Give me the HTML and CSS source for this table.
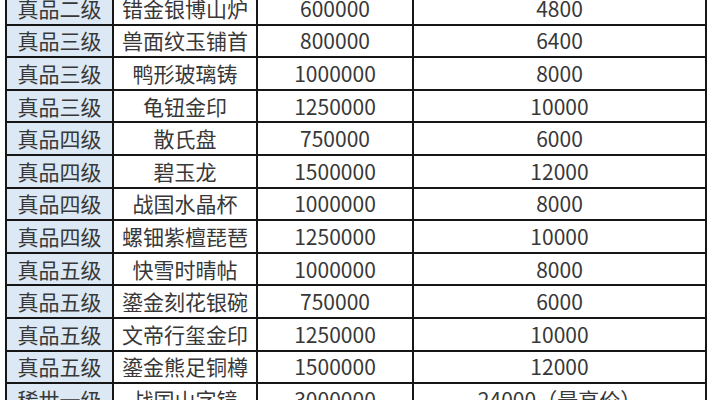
FILE: index.html
```html
<!DOCTYPE html>
<html lang="zh-CN">
<head>
<meta charset="utf-8">
<title>藏品价格表</title>
<link rel="stylesheet" href="styles.css">
</head>
<body>
<table class="price-table">
  <colgroup>
    <col class="c-grade"><col class="c-name"><col class="c-price"><col class="c-value">
  </colgroup>
  <tbody>
    <tr><td class="grade">真品二级</td><td>错金银博山炉</td><td>600000</td><td>4800</td></tr>
    <tr><td class="grade">真品三级</td><td>兽面纹玉铺首</td><td>800000</td><td>6400</td></tr>
    <tr><td class="grade">真品三级</td><td>鸭形玻璃铸</td><td>1000000</td><td>8000</td></tr>
    <tr><td class="grade">真品三级</td><td>龟钮金印</td><td>1250000</td><td>10000</td></tr>
    <tr><td class="grade">真品四级</td><td>散氏盘</td><td>750000</td><td>6000</td></tr>
    <tr><td class="grade">真品四级</td><td>碧玉龙</td><td>1500000</td><td>12000</td></tr>
    <tr><td class="grade">真品四级</td><td>战国水晶杯</td><td>1000000</td><td>8000</td></tr>
    <tr><td class="grade">真品四级</td><td>螺钿紫檀琵琶</td><td>1250000</td><td>10000</td></tr>
    <tr><td class="grade">真品五级</td><td>快雪时晴帖</td><td>1000000</td><td>8000</td></tr>
    <tr><td class="grade">真品五级</td><td>鎏金刻花银碗</td><td>750000</td><td>6000</td></tr>
    <tr><td class="grade">真品五级</td><td>文帝行玺金印</td><td>1250000</td><td>10000</td></tr>
    <tr><td class="grade">真品五级</td><td>鎏金熊足铜樽</td><td>1500000</td><td>12000</td></tr>
    <tr><td class="grade">稀世一级</td><td>战国山字镜</td><td>3000000</td><td>24000（最高价）</td></tr>
  </tbody>
</table>
</body>
</html>
```
FILE: styles.css
```css
html, body {
  margin: 0;
  padding: 0;
  background: #ffffff;
  overflow: hidden;
}

.price-table {
  margin: -9px 0 0 5px;
  width: 700px;
  table-layout: fixed;
  border-collapse: collapse;
  font-family: "Noto Sans CJK SC", "Microsoft YaHei", sans-serif;
  font-size: 21px;
  color: #383838;
}

.c-grade { width: 107px; }
.c-name { width: 144px; }
.c-price { width: 156px; }
.c-value { width: 293px; }

.price-table td {
  height: 30.6px;
  padding: 0;
  border: 2px solid #161616;
  text-align: center;
  vertical-align: middle;
  line-height: 1;
  white-space: nowrap;
  background: #ffffff;
}

.price-table td.grade {
  background: #dce9f4;
}
```
